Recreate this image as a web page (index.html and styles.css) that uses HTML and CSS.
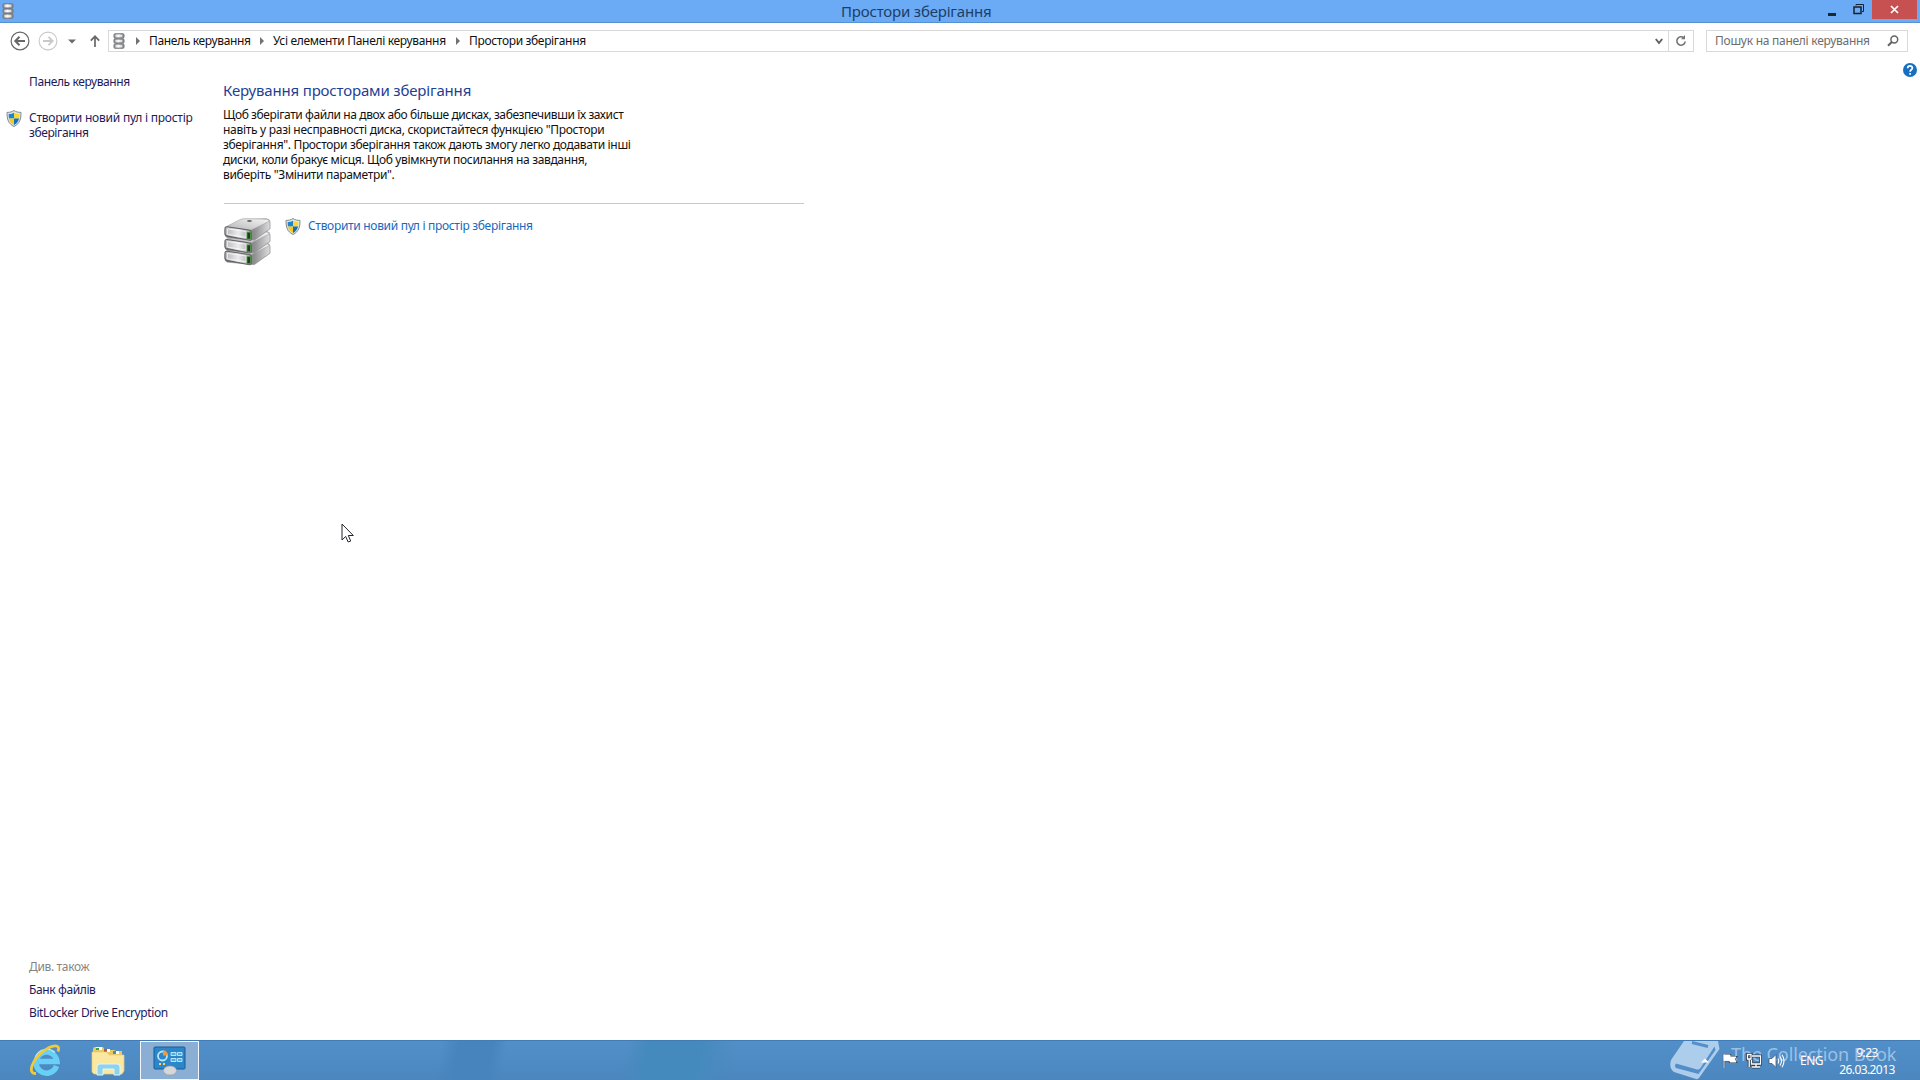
FILE: index.html
```html
<!DOCTYPE html>
<html lang="uk">
<head>
<meta charset="utf-8">
<title>Простори зберігання</title>
<link rel="stylesheet" href="styles.css">
</head>
<body>
<svg class="defs" aria-hidden="true">
  <defs>
    <linearGradient id="metal" x1="0" x2="1"><stop offset="0" stop-color="#9a9a9c"/><stop offset=".45" stop-color="#f4f4f5"/><stop offset="1" stop-color="#8a8a8d"/></linearGradient>
    <linearGradient id="front" x1="0" x2="1"><stop offset="0" stop-color="#b4b4b8"/><stop offset=".5" stop-color="#ececf0"/><stop offset="1" stop-color="#a2a2a6"/></linearGradient>
    <linearGradient id="side" x1="0" x2="1"><stop offset="0" stop-color="#777779"/><stop offset=".65" stop-color="#8e8e90"/><stop offset="1" stop-color="#dededf"/></linearGradient>
    <linearGradient id="top" x1="0" x2="1" y1="1" y2="0"><stop offset="0" stop-color="#b4b4b6"/><stop offset="1" stop-color="#f6f6f6"/></linearGradient>
    <symbol id="drives" viewBox="0 0 12 16">
      <g stroke="#737579" stroke-width="1.1" fill="url(#metal)">
        <rect x="1" y=".8" width="10" height="4.2" rx="1.4"/><rect x="1" y="5.9" width="10" height="4.2" rx="1.4"/><rect x="1" y="11" width="10" height="4.2" rx="1.4"/>
      </g>
      <path d="M3 2.9h6M3 8h6M3 13.1h6" stroke="#fff" stroke-width="1"/>
    </symbol>
    <symbol id="shield" viewBox="0 0 16 17">
      <path d="M8 .5C6 2 3.500 2.400 1 2.400 1 9 2 13.500 8 16.500 14 13.500 15 9 15 2.400 12.500 2.400 10 2 8 .5Z" fill="#e0e4e5" stroke="#7f8b90" stroke-width="1"/>
      <path d="M8 2.800V8.500H3C2.700 7 2.700 5.500 2.700 4.100 4.700 4 6.500 3.700 8 2.800Z" fill="#1f83cd"/>
      <path d="M8 2.800V8.500H13C13.300 7 13.300 5.500 13.300 4.100 11.300 4 9.500 3.700 8 2.800Z" fill="#f6d936"/>
      <path d="M8 8.500H3C3.600 11.500 5 13.300 8 14.900Z" fill="#f1cb25"/>
      <path d="M8 8.500H13C12.400 11.500 11 13.300 8 14.900Z" fill="#176eb5"/>
    </symbol>
    <symbol id="drive" viewBox="0 0 48 24">
      <path d="M1 12 25 1.500 43 .8Q47 1 47 4V11L31 22.500 3 20Q1 19 1 16Z" fill="url(#side)" stroke="#88888a" stroke-width=".7"/>
      <path d="M2 9 16 1.800Q19 .6 22 .6L43 1.200Q47 1.600 46 3.500L28 12.300Z" fill="url(#top)" stroke="#a0a0a2" stroke-width=".6"/>
      <path d="M3 9 25 12.200Q28 12.500 28 15V21Q28 23 26 22.700L4 18.500Q1 18 1 16V10.800Q1 8.900 3 9Z" fill="url(#front)" stroke="#646468" stroke-width="1.1"/>
      <path d="M3.500 11 22.500 13.700V19.800L3.500 16.700Z" fill="none" stroke="#fff" stroke-width=".7"/>
      <rect x="23.500" y="14.500" width="3.600" height="7" fill="#233b23" stroke="#499b3d" stroke-width=".8"/>
    </symbol>
  </defs>
</svg>

<header class="titlebar">
  <svg class="title-icon" width="12" height="16"><use href="#drives"/></svg>
  <h1 class="window-title">Простори зберігання</h1>
  <div class="window-controls">
    <span class="control minimize"><svg width="10" height="14" viewBox="0 0 10 14"><path d="M1 11.500H9" stroke="#1c2733" stroke-width="3"/></svg></span>
    <span class="control restore"><svg width="11" height="11" viewBox="0 0 11 11" fill="none" stroke="#17222e"><path d="M3 1.500V.5H10.500V7.500H9"/><rect x="1" y="3" width="7" height="6.500" stroke-width="1.500"/></svg></span>
    <span class="control close"><svg width="9" height="9" viewBox="0 0 9 9"><path d="M1 1 8 8M8 1 1 8" stroke="#fff" stroke-width="1.700"/></svg></span>
  </div>
</header>

<nav class="navbar">
  <svg class="nav-back" width="20" height="20" viewBox="0 0 20 20" fill="none" stroke="#68686a"><circle cx="10" cy="10" r="8.900" stroke-width="1.200"/><path d="M15 10H5.500M9.500 5.800 5.300 10 9.500 14.200" stroke-width="2"/></svg>
  <svg class="nav-forward" width="20" height="20" viewBox="0 0 20 20" fill="none" stroke="#c9c9cb"><circle cx="10" cy="10" r="8.900" stroke-width="1.100"/><path d="M5 10H14.500M10.500 5.800 14.700 10 10.500 14.200" stroke-width="1.800"/></svg>
  <svg class="nav-recent" width="8" height="5" viewBox="0 0 8 5"><path d="M0 .5H8L4 4.500Z" fill="#6b6b6d"/></svg>
  <svg class="nav-up" width="10" height="12" viewBox="0 0 10 12" fill="none" stroke="#68686a" stroke-width="1.700"><path d="M5 12V1.500M.8 5.700 5 1.300 9.200 5.700"/></svg>
  <div class="address">
    <svg class="address-icon" width="12" height="16"><use href="#drives"/></svg>
    <svg class="crumb-arrow" width="4" height="8" viewBox="0 0 4 8"><path d="M0 0 4 4 0 8Z" fill="#717173"/></svg>
    <span class="crumb crumb-root">Панель керування</span>
    <svg class="crumb-arrow" width="4" height="8" viewBox="0 0 4 8"><path d="M0 0 4 4 0 8Z" fill="#717173"/></svg>
    <span class="crumb crumb-all">Усі елементи Панелі керування</span>
    <svg class="crumb-arrow" width="4" height="8" viewBox="0 0 4 8"><path d="M0 0 4 4 0 8Z" fill="#717173"/></svg>
    <span class="crumb crumb-page">Простори зберігання</span>
    <span class="address-drop"><svg width="8" height="7" viewBox="0 0 8 7"><path d="M.8 1 4 5 7.200 1" fill="none" stroke="#626264" stroke-width="2"/></svg></span>
    <span class="address-refresh"><svg width="12" height="12" viewBox="0 0 12 12"><path d="M9 3A4.200 4.200 0 1 0 10.200 6.500" fill="none" stroke="#747476" stroke-width="1.600"/><path d="M6 4.300H10V0Z" fill="#747476"/></svg></span>
  </div>
  <div class="search">
    <span class="search-hint">Пошук на панелі керування</span>
    <svg width="12" height="12" viewBox="0 0 12 12" fill="none" stroke="#636365"><circle cx="7.300" cy="4.500" r="3.400" stroke-width="1.500"/><path d="M4.800 7 1 10.800" stroke-width="2"/></svg>
  </div>
</nav>

<main class="content">
  <aside class="sidebar">
    <a class="side-link side-home">Панель керування</a>
    <div class="side-task"><svg width="16" height="17"><use href="#shield"/></svg><a class="side-link side-create">Створити новий пул і простір<br><span class="side-create-end">зберігання</span></a></div>
    <div class="see-also">
      <span class="see-title">Див. також</span>
      <a class="side-link see-files">Банк файлів</a>
      <a class="side-link see-bitlocker">BitLocker Drive Encryption</a>
    </div>
  </aside>
  <section class="main-pane">
    <h2 class="page-heading">Керування просторами зберігання</h2>
    <p class="intro">
      <span class="l1">Щоб зберігати файли на двох або більше дисках, забезпечивши їх захист</span>
      <span class="l2">навіть у разі несправності диска, скористайтеся функцією "Простори</span>
      <span class="l3">зберігання". Простори зберігання також дають змогу легко додавати інші</span>
      <span class="l4">диски, коли бракує місця. Щоб увімкнути посилання на завдання,</span>
      <span class="l5">виберіть "Змінити параметри".</span>
    </p>
    <div class="task">
      <svg class="pool-icon" width="47" height="48" viewBox="0 0 48 49"><use href="#drive" y="25" width="48" height="24"/><use href="#drive" y="13" width="48" height="24"/><use href="#drive" width="48" height="24"/><ellipse cx="26" cy="3" rx="2.500" ry="1" fill="#66666a"/></svg>
      <svg class="task-shield" width="16" height="17"><use href="#shield"/></svg>
      <a class="task-link">Створити новий пул і простір зберігання</a>
    </div>
  </section>
  <svg class="help" width="14" height="14" viewBox="0 0 14 14"><circle cx="7" cy="7" r="7" fill="#176fc1"/><path d="M4.700 5.200C4.700 2.200 9.400 2.300 9.400 5 9.400 6.900 7.100 6.700 7.100 8.700M7.100 10V11.700" fill="none" stroke="#fff" stroke-width="1.700"/></svg>
</main>

<footer class="taskbar">
  <div class="task-button ie">
    <svg width="32" height="34" viewBox="0 0 32 34"><path d="M26.500 23A10.500 10.500 0 1 1 27 18.500H9" fill="none" stroke="#68cff5" stroke-width="5.500"/><path d="M25 9.500A12 12 0 0 0 5.500 14" fill="none" stroke="#b8edff" stroke-width="1.200"/><path d="M6 30.500C-3 31 2 17 13 8.500 22 1.500 31 .5 28 8.500" fill="none" stroke="#f2ca38" stroke-width="2.800"/></svg>
  </div>
  <div class="task-button explorer">
    <svg width="34" height="31" viewBox="0 0 34 31"><path d="M2 4Q2 2 4 2H12L14 5H23L25 6H31V27L28 29H5L2 27Z" fill="#e8c968"/><path d="M5 2H11V5H5Z" fill="#fff"/><path d="M5 3H8V5H5Z" fill="#3aa34a"/><path d="M13 4H19V7H13Z" fill="#fff"/><path d="M13 4H16V7H13Z" fill="#c55532"/><path d="M22 6H28V9H22Z" fill="#fff"/><path d="M22 6H25V9H22Z" fill="#398fc6"/><path d="M1 7H16L18 10H33V26L31 29H3L1 27Z" fill="#fae8a0" stroke="#e4cb7a" stroke-width=".7"/><path d="M6 30V22Q6 19 9 19H26Q29 19 29 22V30H23V24H12V30Z" fill="#8fd2ec" stroke="#def6ff" stroke-width="1"/></svg>
  </div>
  <div class="task-button control-panel active">
    <svg width="34" height="30" viewBox="0 0 34 30"><rect x="1" y="1" width="31" height="22" rx="1" fill="#2c87c9" stroke="#1b5c94"/><circle cx="9.500" cy="10" r="4.500" fill="none" stroke="#b9e5fa" stroke-width="1.800"/><path d="M10 9.500V4A5.500 5.500 0 0 1 15 9.500Z" fill="#f09942"/><path d="M18 6.500H23V9.500H18ZM24.500 6.500H29V9.500H24.500ZM18 12.500H23V15.500H18ZM24.500 12.500H29V15.500H24.500Z" fill="#4eb0df" stroke="#d7f3ff" stroke-width=".8"/><path d="M6 18H8M10 18H12" stroke="#ffd34e" stroke-width="2"/><ellipse cx="17" cy="24.500" rx="6.500" ry="4.500" fill="#d5d7da" stroke="#9da1a8" stroke-width=".6"/></svg>
  </div>
  <div class="tray">
    <svg class="tray-more" width="8" height="5" viewBox="0 0 8 5"><path d="M0 4.500 4 .5 8 4.500Z" fill="#fff"/></svg>
    <svg class="tray-flag" width="16" height="16" viewBox="0 0 16 16"><path d="M2 1V15M2 2H8V4H14L12.500 6 14 9H8V7.500H2Z" fill="#fff" stroke="#394c60" stroke-width="2.200"/><path d="M2 1V15M2 2H8V4H14L12.500 6 14 9H8V7.500H2Z" fill="#fff" stroke="#fff" stroke-width=".9"/></svg>
    <svg class="tray-net" width="16" height="16" viewBox="0 0 16 16" fill="none"><path d="M6 3H14.500V11H5.500V7M10 11V14M6 14H14M1.500 1.500H5V6H1.500ZM3.200 6V14" stroke="#2d3d4e" stroke-width="3"/><path d="M6 3H14.500V11H5.500V7M10 11V14M6 14H14M1.500 1.500H5V6H1.500ZM3.200 6V14" stroke="#fff" stroke-width="1.300"/></svg>
    <svg class="tray-sound" width="17" height="16" viewBox="0 0 17 16"><path d="M1 5.500H4L8 1.500V14.500L4 10.500H1Z" fill="#fff" stroke="#455970" stroke-width=".8"/><path d="M10 5.500Q11.500 8 10 10.500M12 3.500Q15 8 12 12.500M14 1.800Q18 8 14 14.200" fill="none" stroke="#fff" stroke-width="1.100"/></svg>
    <span class="tray-lang">ENG</span>
    <div class="clock"><span class="time">9:23</span><span class="date">26.03.2013</span></div>
  </div>
  <div class="watermark">
    <svg width="52" height="40" viewBox="0 0 52 40"><path d="M14 0H48L49.500 8 29 37Q28 38.500 26 38L4 31Q-1.500 27 1 19Z" fill="#bed9f3"/><path d="M6 22.500 27 28.500Q29 29 30.500 27L44.500 5.500 45.500 9 28.500 33 6 27Q4 25 6 22.500Z" fill="#5690cc"/><path d="M22 1.500 38 5.500" stroke="#5690cc" stroke-width="3"/></svg>
    <span class="watermark-text">The Collection Book</span>
  </div>
</footer>

<svg class="cursor" width="13" height="20" viewBox="0 0 13 20"><path d="M1 1V17L4.700 13.500 7.200 19 9.700 18 7.300 12.500H12.300Z" fill="#fff" stroke="#23232b"/></svg>
</body>
</html>
```
FILE: styles.css
```css
* { box-sizing: border-box; }
body { margin: 0; width: 1920px; height: 1080px; overflow: hidden; display: flex; flex-direction: column; background: #fff; color: #111; font: 12px/15px "Noto Sans", "Open Sans", sans-serif; letter-spacing: -.34px; white-space: nowrap; }
svg { display: block; flex: none; }
.defs { position: absolute; width: 0; height: 0; }
h1, h2, p { margin: 0; font-weight: 400; }

.titlebar { height: 23px; flex: none; display: grid; grid-template-columns: 841px 1fr auto; background: #6babf5; border-bottom: 1px solid #5691d2; }
.title-icon { margin: 3px 0 0 2px; }
.window-title { font-size: 15px; line-height: 23px; letter-spacing: -.19px; color: #1d3e66; }
.window-controls { display: flex; height: 19px; margin-right: 3px; }
.control { display: flex; align-items: center; justify-content: center; width: 26px; }
.restore { margin-right: 1px; }
.close { width: 45px; background: #c75050; }

.navbar { height: 37px; flex: none; display: flex; align-items: center; padding: 0 12px 1px 10px; }
.nav-forward { margin-left: 8px; }
.nav-recent { margin-left: 10px; }
.nav-up { margin-left: 14px; }
.address { display: flex; flex: 1; align-items: center; height: 22px; margin-left: 8px; border: 1px solid #d9d9d9; }
.address-icon { margin: 0 11px 0 4px; }
.crumb-arrow { margin-right: 9px; }
.crumb { flex: none; margin-top: -1px; }
.crumb-root { width: 111px; }
.crumb-all { width: 183px; letter-spacing: -.32px; }
.address-drop { margin-left: auto; margin-right: 5px; }
.address-refresh { display: flex; align-items: center; justify-content: center; width: 25px; height: 20px; border-left: 1px solid #d9d9d9; }
.search { flex: none; display: flex; align-items: center; justify-content: space-between; width: 202px; height: 22px; margin-left: 12px; padding: 0 8px 0 8px; border: 1px solid #d9d9d9; color: #6d6d6d; letter-spacing: -.27px; }
.search-hint { margin-top: -1px; }

.content { flex: 1; display: flex; min-height: 0; }
.sidebar { width: 223px; display: flex; flex-direction: column; padding: 14px 0 20px 29px; color: #1e1a5c; }
.side-home, .see-files, .see-bitlocker { letter-spacing: -.39px; }
.side-task { display: flex; margin: 21px 0 0 -23px; gap: 7px; }
.side-create { letter-spacing: -.23px; }
.side-create-end { letter-spacing: -.4px; }
.see-also { display: flex; flex-direction: column; gap: 8px; margin-top: auto; }
.see-title { color: #858585; }
.main-pane { width: 581px; padding-top: 19px; }
.page-heading { font-size: 15px; line-height: 22px; letter-spacing: -.17px; color: #1f3f94; }
.intro { margin-top: 6px; }
.intro span { display: block; }
.l1 { letter-spacing: -.4px; }
.l2 { letter-spacing: -.29px; }
.l5 { letter-spacing: -.32px; }
.task { display: flex; margin: 21px 0 0 1px; padding-top: 14px; border-top: 1px solid #c9c9c9; }
.task-shield { margin-left: 14px; }
.task-link { margin-left: 7px; letter-spacing: -.31px; color: #1769bd; }
.help { margin: 3px 3px 0 auto; }

.taskbar { position: relative; height: 40px; flex: none; display: flex; background: linear-gradient(100deg, transparent 436px, #4783bc 452px, #4783bc 486px, transparent 500px, transparent 618px, #458abd 638px, #458abd 692px, transparent 725px), linear-gradient(#528fc8, #4b86bf); border-top: 1px solid #427cb6; color: #fff; }
.task-button { display: flex; align-items: center; justify-content: center; height: 38px; }
.ie { width: 92px; }
.explorer { width: 32px; }
.active { width: 59px; height: 39px; margin-left: 16px; border: 1px solid #f3f7fb; background: #8baed4; }
.tray { display: flex; align-items: center; width: 220px; margin-left: auto; position: relative; z-index: 1; }
.tray-more { margin-left: 1px; }
.tray-flag { margin-left: 13px; }
.tray-net { margin-left: 8px; }
.tray-sound { margin-left: 6px; }
.tray-lang { width: 24px; margin-left: 15px; letter-spacing: -.5px; }
.clock { display: flex; flex-direction: column; align-items: center; width: 56px; margin-left: 15px; line-height: 17px; letter-spacing: -.6px; }
.watermark { position: absolute; left: 1670px; top: 0; display: flex; opacity: .85; }
.watermark-text { margin: 2px 0 0 9px; font-size: 18px; line-height: 23px; letter-spacing: -.1px; color: #a9cbed; }
.cursor { position: absolute; left: 341px; top: 523px; }
```
